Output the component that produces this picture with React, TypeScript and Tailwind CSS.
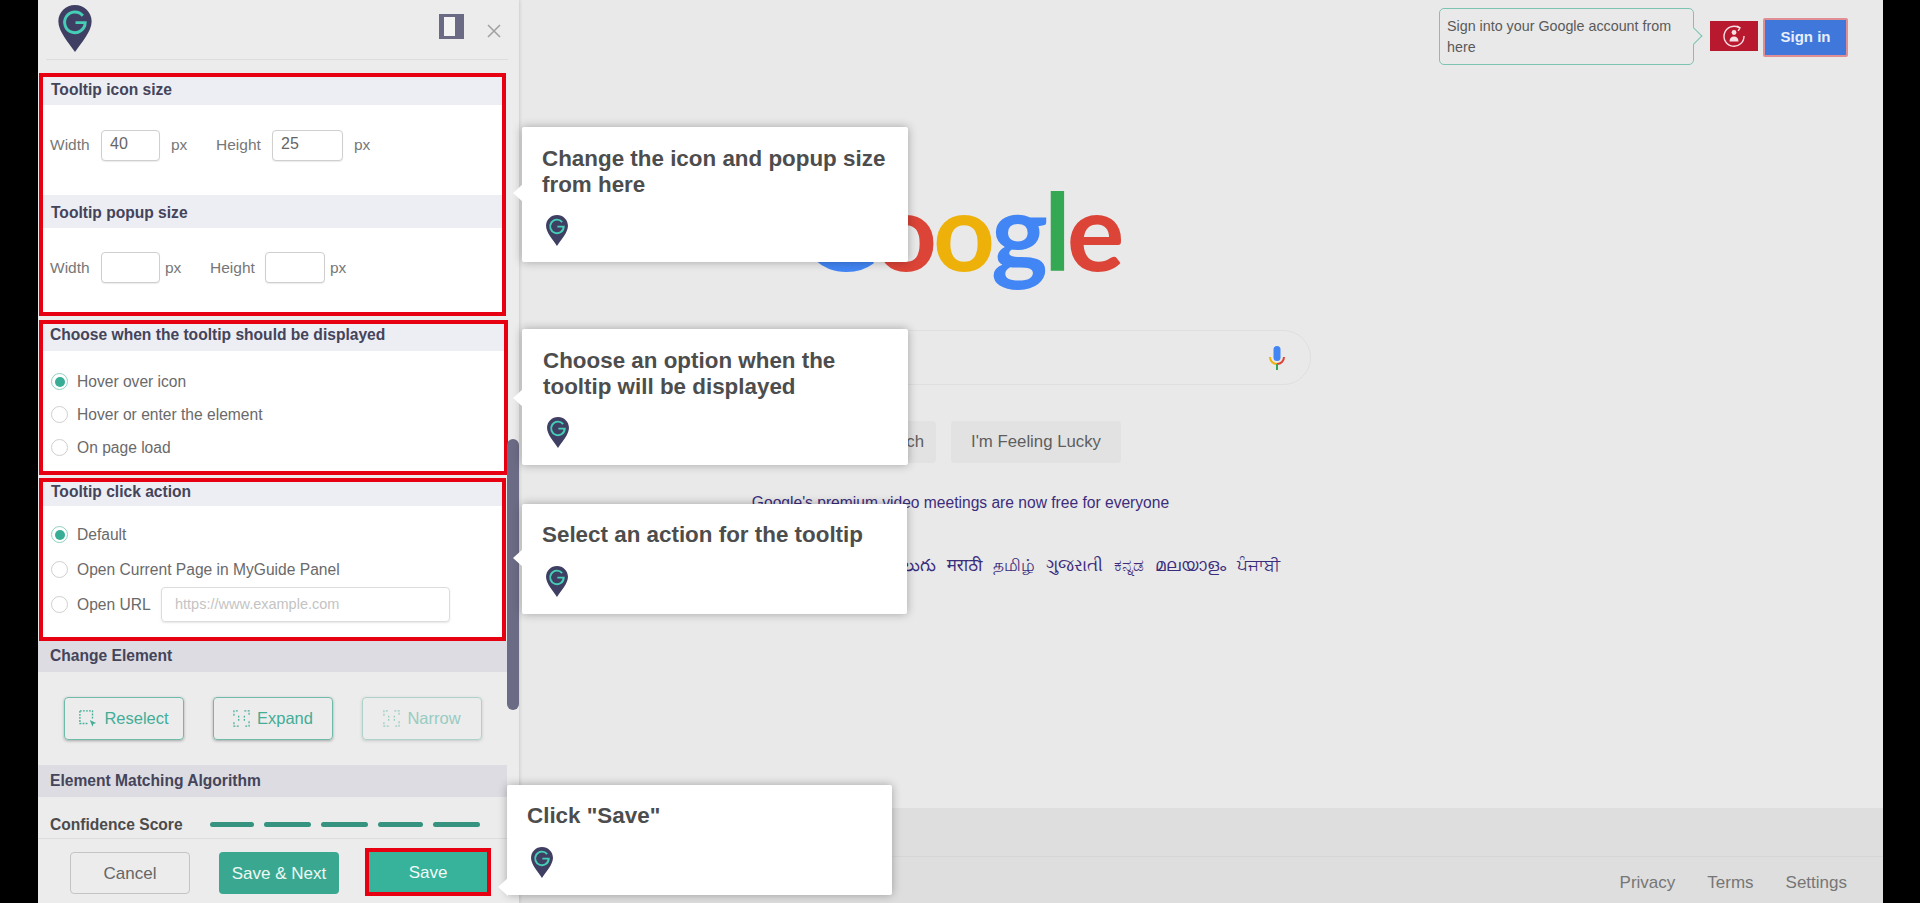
import React from "react";

const SANS = "font-['Liberation_Sans',Arial,sans-serif]";

function Pin({ className }: { className?: string }) {
  return (
    <svg viewBox="0 0 34 48" className={className}>
      <path d="M17 0C7.6 0 0 7.4 0 16.8 0 27 10.5 38.5 17 48c6.5-9.5 17-21 17-31.2C34 7.4 26.4 0 17 0z" fill="#3f3f63" />
      <path d="M25 11A10.5 10.5 0 1 0 27.4 18H17.5" fill="none" stroke="#45cdb6" strokeWidth="3" />
    </svg>
  );
}

function Tip({ className, arrow, lines }: { className: string; arrow: string; lines: string[] }) {
  return (
    <div className={`absolute bg-white rounded-[2px] shadow-[0_0_10px_rgba(0,0,0,0.3)] text-[#4d4d4d] font-bold text-[22.4px] leading-[26px] ${className}`}>
      <div className={`absolute -left-[9px] w-0 h-0 border-y-[9px] border-r-[10px] border-y-transparent border-r-white ${arrow}`} />
      {lines.map((l) => (
        <div key={l}>{l}</div>
      ))}
      <Pin className="absolute w-[22px] h-[31px]" />
    </div>
  );
}

function SectionHead({ children, className }: { children: React.ReactNode; className: string }) {
  return <div className={`flex items-center text-[15.6px] font-bold text-[#44445a] ${className}`}>{children}</div>;
}

function Radio({ on }: { on?: boolean }) {
  return (
    <span className={`flex items-center justify-center w-[17px] h-[17px] rounded-full border-[1.5px] shrink-0 ${on ? "border-[#8fd0c0]" : "border-[#cfcfcf]"}`}>
      {on && <span className="w-[10px] h-[10px] rounded-full bg-[#36ad94]" />}
    </span>
  );
}

function RadioRow({ on, label, className }: { on?: boolean; label: string; className: string }) {
  return (
    <div className={`flex items-center gap-[9px] text-[15.6px] text-[#6a6a6a] ${className}`}>
      <Radio on={on} />
      <span>{label}</span>
    </div>
  );
}

function SizeInput({ value, className }: { value?: string; className: string }) {
  return (
    <span className={`flex items-center pl-[8px] pb-[2px] h-[31px] border border-[#cfcfcf] rounded-[4px] shadow-[0_1px_1px_rgba(0,0,0,0.08)] text-[16px] text-[#666] bg-white ${className}`}>
      {value}
    </span>
  );
}

function Corners() {
  return (
    <svg viewBox="0 0 18 18" className="w-[17px] h-[17px]" fill="none" stroke="currentColor" strokeWidth="1.3" strokeDasharray="2 1.5">
      <path d="M1 6V1h5M12 1h5v5M17 12v5h-5M6 17H1v-5" />
      <path d="M6 6v6M12 6v6" />
    </svg>
  );
}

function ActionButton({ children, className, label }: { children: React.ReactNode; className?: string; label: string }) {
  return (
    <button className={`flex items-center justify-center gap-[7px] w-[120px] h-[43px] rounded-[4px] border border-[#6fbaa8] shadow-[0_1px_3px_rgba(0,0,0,0.3)] text-[#43ad97] text-[16.5px] ${className ?? ""}`}>
      {children}
      <span>{label}</span>
    </button>
  );
}

function GooglePage() {
  return (
    <div className={`flex flex-col h-full items-center bg-[#e9e9e9] ${SANS}`}>
      <div className="flex items-start w-full justify-end pt-[8px] pr-[35px] h-[171px] shrink-0">
        <div className="relative w-[255px] h-[57px] border border-[#7cc4b1] rounded-[5px] pl-[7px] pt-[7px] text-[14.3px] leading-[21px] text-[#5a5a5a]">
          Sign into your Google account from<br />here
          <span className="absolute -right-[7px] top-[21px] w-[12px] h-[12px] rotate-45 border-t border-r border-[#7cc4b1] bg-[#e9e9e9]" />
        </div>
        <div className="flex items-center justify-center w-[48px] h-[30px] mt-[13px] ml-[16px] bg-[#b8192f]">
          <svg viewBox="0 0 24 24" className="w-[24px] h-[24px]" fill="none" stroke="#f6dfe2" strokeWidth="1.4">
            <path d="M17 3.6A10 10 0 1 0 22 12" />
            <path d="M15 2l3 1.8-1.8 3" />
            <circle cx="12" cy="8.5" r="2.4" fill="#f6dfe2" stroke="none" />
            <path d="M7.5 17.5c0-3.4 2-5 4.5-5s4.5 1.6 4.5 5z" fill="#f6dfe2" stroke="none" />
          </svg>
        </div>
        <div className="flex items-center justify-center w-[85px] h-[39px] mt-[10px] ml-[5px] border-2 border-[#e08e94] rounded-[2px] bg-[#3f78da] text-[#e8eefb] font-bold text-[15px]">
          Sign in
        </div>
      </div>

      <div className="flex items-baseline h-[116px] text-[108px] font-bold leading-[116px] font-['Lato',sans-serif] tracking-[-4px] shrink-0">
        <span className="text-[#4285f4]">G</span>
        <span className="text-[#db4437]">o</span>
        <span className="text-[#eeb109]">o</span>
        <span className="text-[#4285f4]">g</span>
        <span className="text-[#34a853]">l</span>
        <span className="text-[#db4437]">e</span>
      </div>

      <div className="flex items-center justify-end w-[700px] h-[55px] mt-[43px] pr-[24px] rounded-full border border-[#dfdfdf] shrink-0">
        <svg viewBox="0 0 18 24" className="w-[18px] h-[24px]">
          <rect x="5.5" y="0" width="7" height="15" rx="3.5" fill="#4285f4" />
          <path d="M2 11c0 4 3 7 7 7" fill="none" stroke="#eeb109" strokeWidth="2" />
          <path d="M16 11c0 4-3 7-7 7" fill="none" stroke="#db4437" strokeWidth="2" />
          <rect x="8" y="18" width="2" height="6" fill="#34a853" />
        </svg>
      </div>

      <div className="flex gap-[15px] mt-[36px] shrink-0">
        <div className="flex items-center justify-center w-[136px] h-[42px] rounded-[4px] bg-[#e2e2e2] text-[16.8px] text-[#5e5e5e] whitespace-nowrap">Google Search</div>
        <div className="flex items-center justify-center w-[170px] h-[42px] rounded-[4px] bg-[#e2e2e2] text-[16.8px] text-[#5e5e5e]">I'm Feeling Lucky</div>
      </div>

      <div className="mt-[28px] text-[15.6px] text-[#3c2d7c] shrink-0">Google's premium video meetings are now free for everyone</div>

      <div className="mt-[38px] flex gap-[11px] text-[17px] text-[#3c2d7c] font-['Noto_Sans','DejaVu_Sans',sans-serif] shrink-0">
        <span>Google offered in:</span><span>हिन्दी</span><span>বাংলা</span><span>తెలుగు</span><span>मराठी</span><span>தமிழ்</span><span>ગુજરાતી</span><span>ಕನ್ನಡ</span><span>മലയാളം</span><span>ਪੰਜਾਬੀ</span>
      </div>

      <div className="mt-auto w-full shrink-0">
        <div className="h-[49px] bg-[#dedede] border-b border-[#d6d6d6]" />
        <div className="flex justify-end items-center gap-[32px] h-[46px] pt-[6px] pr-[36px] bg-[#dedede] text-[17px] text-[#767676]">
          <span>Privacy</span>
          <span>Terms</span>
          <span>Settings</span>
        </div>
      </div>
    </div>
  );
}

function Panel() {
  return (
    <div className={`absolute left-0 top-0 bottom-0 w-[481px] flex flex-col bg-[#ececec] shadow-[1px_0_3px_rgba(0,0,0,0.12)] ${SANS}`}>
      <div className="relative flex items-start justify-between h-[60px] mx-[8px] w-[462px] border-b border-[#dddddd] shrink-0">
        <Pin className="w-[34px] h-[47px] mt-[5px] ml-[12px]" />
        <div className="flex items-center gap-[23px] mt-[14px] mr-[7px]">
          <svg viewBox="0 0 25 25" className="w-[25px] h-[25px]">
            <rect width="25" height="25" fill="#6a6a84" />
            <rect x="5" y="3" width="11" height="19" fill="#f3f3f3" />
          </svg>
          <svg viewBox="0 0 14 14" className="w-[14px] h-[14px] mt-[9px]" stroke="#a2a2a2" strokeWidth="1.6">
            <path d="M1 1l12 12M13 1L1 13" />
          </svg>
        </div>
      </div>

      <div className="flex-1 min-h-0 overflow-hidden pt-[13px]">
        <div className="ml-[1px] w-[467px] h-[243px] border-4 border-[#e60012] bg-white">
          <SectionHead className="h-[28px] pl-[8px] pb-[2px] bg-[#edeef4]">Tooltip icon size</SectionHead>
          <div className="flex items-center h-[90px] pl-[7px] pb-[10px] text-[15.5px] text-[#777]">
            <span className="w-[51px]">Width</span>
            <SizeInput value="40" className="w-[59px]" />
            <span className="ml-[11px] w-[45px]">px</span>
            <span className="w-[56px]">Height</span>
            <SizeInput value="25" className="w-[71px]" />
            <span className="ml-[11px]">px</span>
          </div>
          <SectionHead className="h-[33px] pl-[8px] pt-[2px] bg-[#edeef4]">Tooltip popup size</SectionHead>
          <div className="flex items-center pl-[7px] pt-[24px] text-[15.5px] text-[#777]">
            <span className="w-[51px]">Width</span>
            <SizeInput className="w-[59px]" />
            <span className="ml-[5px] w-[45px]">px</span>
            <span className="w-[55px]">Height</span>
            <SizeInput className="w-[60px]" />
            <span className="ml-[5px]">px</span>
          </div>
        </div>

        <div className="ml-[1px] mt-[4px] w-[469px] h-[155px] border-4 border-[#e60012] bg-white">
          <SectionHead className="h-[27px] pl-[7px] pb-[5px] bg-[#edeef4]">Choose when the tooltip should be displayed</SectionHead>
          <div className="pt-[14px] pl-[8px]">
            <RadioRow on label="Hover over icon" className="h-[33px]" />
            <RadioRow label="Hover or enter the element" className="h-[33px]" />
            <RadioRow label="On page load" className="h-[33px]" />
          </div>
        </div>

        <div className="ml-[1px] mt-[3px] w-[467px] h-[163px] border-4 border-[#e60012] bg-white">
          <SectionHead className="h-[24px] pl-[8px] pb-[5px] bg-[#edeef4]">Tooltip click action</SectionHead>
          <div className="pt-[11px] pl-[8px]">
            <RadioRow on label="Default" className="h-[35px]" />
            <RadioRow label="Open Current Page in MyGuide Panel" className="h-[35px]" />
            <div className="flex items-center h-[35.5px]">
              <RadioRow label="Open URL" className="w-[110px]" />
              <div className="flex items-center w-[289px] h-[35px] pl-[13px] border border-[#dcdcdc] rounded-[4px] shadow-[0_1px_2px_rgba(0,0,0,0.1)] text-[14.5px] text-[#c4c4c4]">
                https://www.example.com
              </div>
            </div>
          </div>
        </div>

        <SectionHead className="h-[31px] w-[469px] pl-[12px] pb-[2px] bg-[#dcdce2]">Change Element</SectionHead>
        <div className="flex gap-[29px] pl-[26px] pt-[25px] h-[93px] w-[469px]">
          <ActionButton label="Reselect">
            <svg viewBox="0 0 20 20" className="w-[18px] h-[18px]" fill="none" stroke="#43ad97" strokeWidth="1.5">
              <path d="M1 1h14v9M1 1v14h9" strokeDasharray="2 1.4" />
              <path d="M12 11l7 3.5-3 1-1 3z" fill="#43ad97" stroke="none" />
            </svg>
          </ActionButton>
          <ActionButton label="Expand">
            <Corners />
          </ActionButton>
          <ActionButton label="Narrow" className="opacity-50">
            <Corners />
          </ActionButton>
        </div>
        <SectionHead className="h-[32px] w-[469px] pl-[12px] bg-[#dcdce2]">Element Matching Algorithm</SectionHead>
        <div className="flex items-center pl-[12px] pt-[16px] w-[469px]">
          <span className="w-[160px] text-[15.6px] font-bold text-[#4b4b4b]">Confidence Score</span>
          <div className="flex gap-[10px]">
            <span className="w-[44px] h-[5px] rounded-full bg-[#36937f]" />
            <span className="w-[47px] h-[5px] rounded-full bg-[#36937f]" />
            <span className="w-[47px] h-[5px] rounded-full bg-[#36937f]" />
            <span className="w-[45px] h-[5px] rounded-full bg-[#36937f]" />
            <span className="w-[47px] h-[5px] rounded-full bg-[#36937f]" />
          </div>
        </div>
      </div>

      <div className="flex items-center h-[65px] pl-[32px] pt-[4px] w-[469px] border-t border-[#dddddd] shrink-0 text-[17px]">
        <div className="flex items-center justify-center w-[120px] h-[42px] pt-[1px] rounded-[4px] border border-[#c4c4c4] text-[#666]">Cancel</div>
        <div className="flex items-center justify-center w-[120px] h-[42px] pt-[1px] ml-[29px] rounded-[4px] bg-[#3aa890] text-[#eef8f5]">Save &amp; Next</div>
        <div className="flex items-center justify-center w-[126px] h-[48px] pt-[2px] ml-[26px] -mt-[2px] border-4 border-[#e60012] bg-[#36b39a] text-[#f2faf8]">Save</div>
      </div>

      <div className="absolute left-[469px] top-[439px] w-[12px] h-[271px] rounded-full bg-[#6b6b85]" />
    </div>
  );
}

export default function App() {
  return (
    <div className="h-[903px] w-[1920px] bg-black pl-[38px] pr-[37px] overflow-hidden">
      <div className={`relative h-full ${SANS}`}>
        <GooglePage />
        <Panel />
        <Tip
          className="left-[484px] top-[127px] w-[386px] h-[135px] pl-[20px] pt-[19px] [&>svg]:left-[24px] [&>svg]:top-[88px]"
          arrow="top-[57px]"
          lines={["Change the icon and popup size", "from here"]}
        />
        <Tip
          className="left-[484px] top-[329px] w-[386px] h-[136px] pl-[21px] pt-[19px] [&>svg]:left-[25px] [&>svg]:top-[88px]"
          arrow="top-[60px]"
          lines={["Choose an option when the", "tooltip will be displayed"]}
        />
        <Tip
          className="left-[484px] top-[504px] w-[385px] h-[110px] pl-[20px] pt-[18px] [&>svg]:left-[24px] [&>svg]:top-[62px]"
          arrow="top-[45px]"
          lines={["Select an action for the tooltip"]}
        />
        <Tip
          className="left-[469px] top-[785px] w-[385px] h-[110px] pl-[20px] pt-[18px] [&>svg]:left-[24px] [&>svg]:top-[62px]"
          arrow="top-[93px]"
          lines={['Click "Save"']}
        />
      </div>
    </div>
  );
}
